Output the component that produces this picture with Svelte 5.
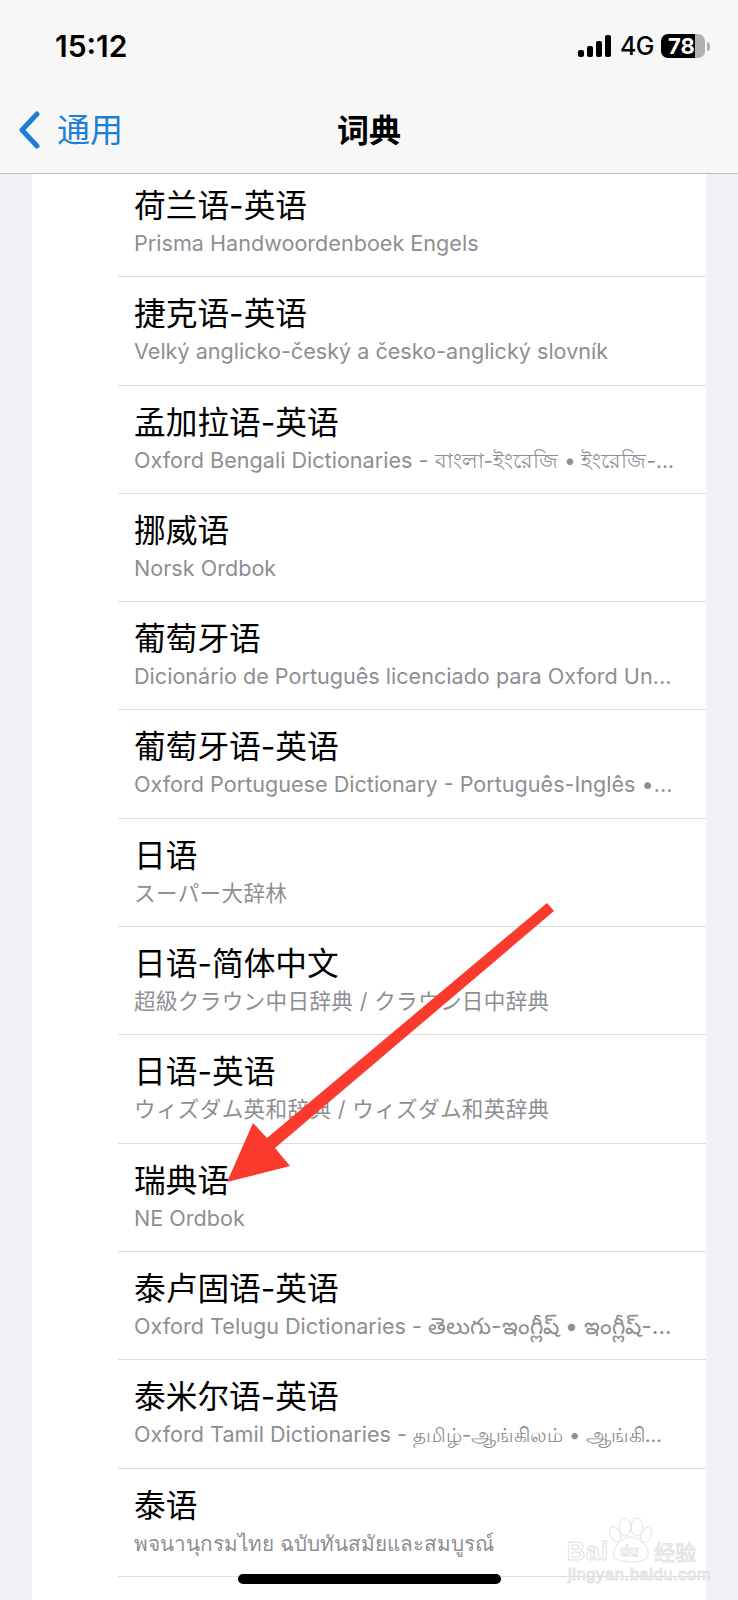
<script lang="ts">
	const rows = [
		{ title: "荷兰语-英语", sub: "Prisma Handwoordenboek Engels" },
		{ title: "捷克语-英语", sub: "Velký anglicko-český a česko-anglický slovník" },
		{ title: "孟加拉语-英语", sub: "Oxford Bengali Dictionaries - ", script: "বাংলা-ইংরেজি • ইংরেজি-...", lang: "bn" },
		{ title: "挪威语", sub: "Norsk Ordbok" },
		{ title: "葡萄牙语", sub: "Dicionário de Português licenciado para Oxford Un..." },
		{ title: "葡萄牙语-英语", sub: "Oxford Portuguese Dictionary - Português-Inglês •..." },
		{ title: "日语", sub: "", script: "スーパー大辞林", lang: "ja" },
		{ title: "日语-简体中文", sub: "", script: "超級クラウン中日辞典 / クラウン日中辞典", lang: "ja" },
		{ title: "日语-英语", sub: "", script: "ウィズダム英和辞典 / ウィズダム和英辞典", lang: "ja" },
		{ title: "瑞典语", sub: "NE Ordbok" },
		{ title: "泰卢固语-英语", sub: "Oxford Telugu Dictionaries - ", script: "తెలుగు-ఇంగ్లీష్ • ఇంగ్లీష్-...", lang: "te" },
		{ title: "泰米尔语-英语", sub: "Oxford Tamil Dictionaries - ", script: "தமிழ்-ஆங்கிலம் • ஆங்கி...", lang: "ta" },
		{ title: "泰语", sub: "", script: "พจนานุกรมไทย ฉบับทันสมัยและสมบูรณ์", lang: "th" }
	];
</script>

<div class="screen">
	<header class="nav">
		<div class="status">
			<span class="time">15:12</span>
			<div class="status-right">
				<svg class="signal" width="34" height="22" viewBox="0 0 34 22" aria-hidden="true">
					<rect x="0" y="15" width="6" height="7" rx="2" />
					<rect x="9" y="11" width="6" height="11" rx="2" />
					<rect x="18" y="6" width="6" height="16" rx="2" />
					<rect x="27" y="0" width="6" height="22" rx="2" />
				</svg>
				<span class="net">4G</span>
				<div class="battery">
					<div class="battery-body"><span>78</span></div>
					<div class="battery-nub"></div>
				</div>
			</div>
		</div>
		<div class="bar">
			<div class="back">
				<svg width="24" height="38" viewBox="0 0 24 38" aria-hidden="true">
					<path d="M20 3 L5 19 L20 35" fill="none" stroke="#1c7ed6" stroke-width="5" stroke-linecap="round" stroke-linejoin="round" />
				</svg>
				<span>通用</span>
			</div>
			<h1>词典</h1>
		</div>
	</header>

	<main class="scroller">
		<div class="card">
			{#each rows as row}
				<div class="row">
					<div class="title">{row.title}</div>
					<div class="sub">{row.sub}{#if row.script}<span class={row.lang}>{row.script}</span>{/if}</div>
				</div>
			{/each}
		</div>
	</main>

	<svg class="arrow" width="738" height="1600" viewBox="0 0 738 1600" aria-hidden="true">
		<polygon points="547,903 554,911 275,1148 290,1166 227,1182 253,1123 267,1138" fill="#fb3a2e" />
	</svg>

	<!-- baidu watermark, outlined and very faint -->
	<svg class="watermark" width="170" height="80" viewBox="550 1510 170 80" aria-hidden="true">
		<ellipse cx="625" cy="1527" rx="6" ry="9" />
		<ellipse cx="637" cy="1527" rx="6" ry="9" />
		<ellipse cx="615" cy="1534" rx="5" ry="8" transform="rotate(-25 615 1534)" />
		<ellipse cx="646" cy="1535" rx="5" ry="8" transform="rotate(25 646 1535)" />
		<path d="M631 1537 C641 1537 650 1548 648 1556 C646 1564 616 1564 614 1556 C612 1548 621 1537 631 1537 Z" />
		<text class="wm-bai" x="567" y="1560">Bai</text>
		<text class="wm-du" x="620" y="1556">du</text>
		<text class="wm-jy" x="654" y="1560">经验</text>
		<text class="wm-url" x="568" y="1580">jingyan.baidu.com</text>
	</svg>

	<div class="home"></div>
</div>

<style>
	:global(body) {
		background: #f2f2f7;
	}

	.screen {
		position: relative;
		width: 738px;
		height: 1600px;
		overflow: hidden;
		background: #f1f1f7;
		font-family: Inter, "Noto Sans CJK SC", "DejaVu Sans", sans-serif;
		color: #000;
	}

	.nav {
		height: 174px;
		box-sizing: border-box;
		background: #f7f7f8;
		border-bottom: 1px solid #bdbdbf;
		display: flex;
		flex-direction: column;
	}

	.status {
		height: 90px;
		padding: 30px 28px 0 55px;
		box-sizing: border-box;
		display: flex;
		justify-content: space-between;
		align-items: flex-start;
	}

	.time {
		font-size: 30px;
		font-weight: 600;
		line-height: 32px;
	}

	.status-right {
		display: flex;
		align-items: center;
		height: 32px;
	}

	.signal {
		fill: #000;
		margin-right: 8px;
	}

	.net {
		font-size: 25px;
		font-weight: 500;
		line-height: 32px;
		letter-spacing: -0.5px;
		margin-right: 7px;
	}

	.battery {
		display: flex;
		align-items: center;
	}

	.battery-body {
		width: 44px;
		height: 24px;
		border-radius: 7px;
		background: linear-gradient(90deg, #000 0 78%, #b0b0b0 78%);
		color: #fff;
		font-size: 22px;
		font-weight: 700;
		line-height: 24px;
		padding-left: 7px;
		box-sizing: border-box;
	}

	.battery-nub {
		width: 3px;
		height: 9px;
		margin-left: 2px;
		border-radius: 0 3px 3px 0;
		background: #b0b0b0;
	}

	.bar {
		position: relative;
		height: 82px;
		display: flex;
		align-items: center;
		justify-content: center;
	}

	.back {
		position: absolute;
		left: 17px;
		top: 21px;
		display: flex;
		align-items: center;
		gap: 16px;
		font-size: 33px;
		line-height: 38px;
		color: #1c7ed6;
	}

	h1 {
		margin: 0;
		font-size: 32px;
		font-weight: 700;
		line-height: 38px;
	}

	.scroller {
		height: 1426px;
		overflow: hidden;
	}

	.card {
		margin: -5px 32px 0;
		min-height: 1440px;
		background: #fff;
	}

	.row {
		height: 108.3px;
		margin-left: 86px;
		box-sizing: border-box;
		padding: 15px 32px 0 16px;
		border-bottom: 1px solid #dedee0;
	}

	.title {
		font-size: 31.7px;
		line-height: 44px;
		white-space: nowrap;
	}

	.sub {
		font-size: 21.6px;
		line-height: 30px;
		color: #8e8e93;
		white-space: nowrap;
	}

	.bn {
		font-size: 20.8px;
	}

	.te {
		font-size: 22.9px;
	}

	.ta {
		font-size: 20px;
	}

	.th {
		font-size: 20.7px;
	}

	.ja {
		font-size: 21.6px;
		letter-spacing: 0.33px;
	}

	.arrow {
		position: absolute;
		left: 0;
		top: 0;
		pointer-events: none;
	}

	.watermark {
		position: absolute;
		left: 550px;
		top: 1510px;
		fill: none;
		stroke: #e2e2e2;
		stroke-width: 1;
		font-family: "Liberation Sans", "Noto Sans CJK SC", sans-serif;
	}

	.wm-bai {
		font-size: 25px;
		font-weight: 700;
		letter-spacing: 1px;
	}

	.wm-du {
		font-size: 15px;
		font-weight: 700;
	}

	.wm-jy {
		font-size: 21px;
	}

	.wm-url {
		font-size: 16.5px;
		letter-spacing: 0.6px;
	}

	.home {
		position: absolute;
		left: 238px;
		top: 1574px;
		width: 263px;
		height: 10px;
		border-radius: 5px;
		background: #000;
	}
</style>
